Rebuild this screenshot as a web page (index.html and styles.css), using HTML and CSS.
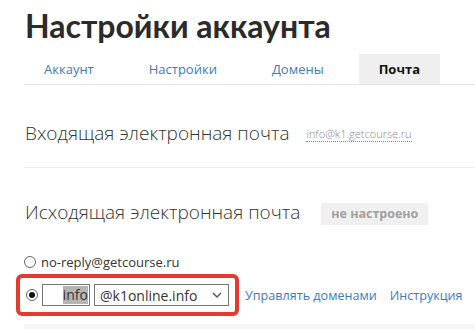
FILE: index.html
```html
<!DOCTYPE html>
<html lang="ru">
<head>
    <meta charset="UTF-8">
    <meta name="viewport" content="width=device-width, initial-scale=1.0">
    <title>Настройки аккаунта</title>
    <link rel="stylesheet" href="styles.css">
</head>
<body>
    <div class="page">
        <h1>Настройки аккаунта</h1>

        <!-- Tabs -->
        <ul class="tabs">
            <li><a href="#">Аккаунт</a></li>
            <li><a href="#">Настройки</a></li>
            <li><a href="#">Домены</a></li>
            <li class="active"><a href="#">Почта</a></li>
            <li class="extra"><a href="#">Платежи</a></li>
        </ul>

        <!-- Incoming mail -->
        <div class="section">
            <h2>Входящая электронная почта <span class="address">info@k1.getcourse.ru</span></h2>
        </div>

        <!-- Outgoing mail -->
        <div class="section last">
            <h2>Исходящая электронная почта <span class="badge">не настроено</span></h2>

            <label class="option">
                <input type="radio" name="sender">
                no-reply@getcourse.ru
            </label>

            <div class="option-row">
                <div class="highlight">
                    <input type="radio" name="sender" checked>
                    <span class="login-box"><span class="selected">info</span></span>
                    <span class="domain-select">
                        @k1online.info
                        <svg width="10" height="6" viewBox="0 0 10 6"><path d="M1 1 L5 5 L9 1" fill="none" stroke="#555" stroke-width="1.4"/></svg>
                    </span>
                </div>
                <a href="#" class="link">Управлять доменами</a>
                <a href="#" class="link">Инструкция</a>
            </div>
        </div>

        <div class="footer-bar"></div>
    </div>
</body>
</html>
```

FILE: styles.css
```css
body {
    margin: 0;
    font-family: "Open Sans", Arial, sans-serif;
    color: #333;
    background: #fff;
    overflow: hidden;
}
.page {
    padding-left: 24px;
}
h1 {
    margin: 0;
    padding-top: 6px;
    padding-left: 1px;
    font-family: Lato, "Open Sans", sans-serif;
    font-size: 32px;
    font-weight: 700;
    line-height: 40px;
    color: #2b2b2b;
    white-space: nowrap;
}

/* Tabs */
.tabs {
    list-style: none;
    margin: 8px 0 0 0;
    padding: 0;
    display: flex;
    gap: 15px;
    border-bottom: 1px solid #e8e8e8;
    white-space: nowrap;
}
.tabs li a {
    display: block;
    padding: 0 20px;
    height: 30px;
    line-height: 30px;
    font-size: 13px;
    color: #3b7cc0;
    text-decoration: none;
}
.tabs li.active a {
    background-color: #efefef;
    color: #111;
    font-weight: 700;
}
.tabs li.extra a {
    color: #f3b2a6;
}

/* Sections */
.section {
    border-bottom: 1px solid #efefef;
    padding: 36px 0 21px 1px;
}
.section.last {
    border-bottom: none;
    padding-top: 32px;
    padding-bottom: 4px;
}
h2 {
    margin: 0;
    font-size: 19px;
    font-weight: 300;
    line-height: 24px;
    color: #333;
    white-space: nowrap;
}
.address {
    margin-left: 12px;
    font-size: 11px;
    color: #888;
    border-bottom: 1px dotted #888;
    vertical-align: 2px;
}
.badge {
    display: inline-block;
    margin-left: 16px;
    padding: 0 10px;
    height: 22px;
    line-height: 22px;
    font-size: 12.5px;
    font-weight: 700;
    color: #a0a0a0;
    background-color: #f0f0f0;
    vertical-align: 1px;
}

/* Radio options */
input[type="radio"] {
    appearance: none;
    width: 12px;
    height: 12px;
    margin: 0;
    border: 1px solid #666;
    border-radius: 50%;
    background: #fff;
    position: relative;
    flex: none;
}
input[type="radio"]:checked::after {
    content: "";
    position: absolute;
    left: 2px;
    top: 2px;
    width: 6px;
    height: 6px;
    border-radius: 50%;
    background: #111;
}
.option {
    margin-top: 28px;
    display: flex;
    align-items: center;
    gap: 5px;
    font-size: 13px;
    color: #333;
    margin-left: -1px;
}
.option-row {
    display: flex;
    align-items: center;
    margin-top: 3px;
    margin-left: -9px;
    white-space: nowrap;
}
.highlight {
    display: flex;
    align-items: center;
    gap: 4px;
    border: 4px solid #e53a2f;
    border-radius: 6px;
    padding: 6px 6px 6px 6px;
}
.login-box {
    display: flex;
    justify-content: flex-end;
    align-items: center;
    box-sizing: border-box;
    width: 48px;
    height: 22px;
    border: 1px solid #767676;
    padding: 0 1px;
    font-size: 14px;
}
.selected {
    background-color: #b5b5b5;
    color: #333;
    line-height: 18px;
}
.domain-select {
    display: flex;
    align-items: center;
    justify-content: space-between;
    box-sizing: border-box;
    width: 135px;
    height: 22px;
    border: 1px solid #767676;
    padding: 0 6px 0 5px;
    font-size: 14px;
    color: #333;
}
.link {
    margin-left: 6px;
    margin-right: 7px;
    font-size: 12.6px;
    color: #3b7cc0;
    text-decoration: none;
}
.footer-bar {
    height: 20px;
    margin-top: 4px;
    background-color: #f6f6f6;
}
```
